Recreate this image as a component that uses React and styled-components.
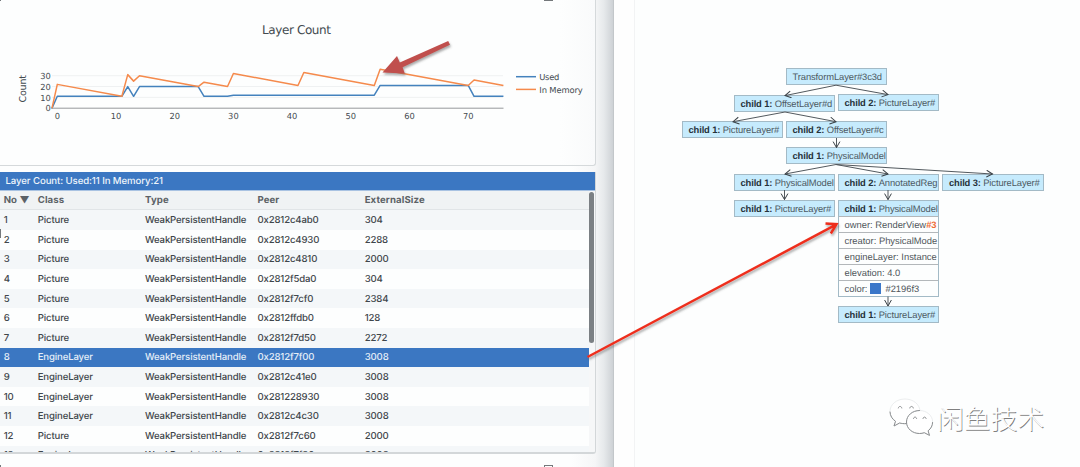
import React from "react";
import styled, { createGlobalStyle } from "styled-components";

const GlobalStyle = createGlobalStyle`
  * {
    box-sizing: border-box;
  }
  body {
    margin: 0;
    background: #fdfefe;
    overflow: hidden;
    text-rendering: geometricPrecision;
  }
`;

const Page = styled.div`
  position: relative;
  display: flex;
  width: 1080px;
  height: 467px;
  overflow: hidden;
  font-family: Inter, sans-serif;
`;
const Inspector = styled.div`
  width: 614px;
  height: 467px;
  flex: none;
  padding-right: 17px;
  border-right: 1px solid #c3c7ca;
  background: linear-gradient(to right, #fdfefe 572px, #f5f6f7 595px, #e6e9eb 604px, #cbcfd3 614px);
`;
const ChartPanel = styled.div`
  height: 166px;
  border: solid #d5d9db;
  border-width: 0 1px 1px 0;
  border-bottom-right-radius: 3px;
  background: linear-gradient(to right, #fdfefe 560px, #f9fafb);
`;
const TablePanel = styled.div`
  margin-top: 6px;
  height: 282px;
  overflow: hidden;
  border: solid #d3d7d9;
  border-width: 0 1px 2px 0;
  border-bottom-right-radius: 3px;
  display: flex;
  flex-direction: column;
`;
const TableTitle = styled.div`
  flex: none;
  height: 19px;
  padding: 1px 0 0 5.5px;
  line-height: 18px;
  font-size: 9.6px;
  font-weight: 500;
  letter-spacing: -0.08px;
  color: #eef5fb;
  background: #3b77c2;
  border-bottom: 1px solid #a9c3e2;
`;
const TableBody = styled.div`
  display: flex;
  flex: 1;
  min-height: 0;
`;
const Rows = styled.div`
  flex: 1;
  overflow: hidden;
`;
const Track = styled.div`
  width: 6px;
  padding-top: 1px;
  background: #f6f7f8;
`;
const Thumb = styled.div`
  width: 5px;
  height: 151px;
  border-radius: 3px;
  background: #7b8084;
`;
const Row = styled.div`
  display: grid;
  grid-template-columns: 34px 107.3px 112.4px 107.3px 1fr;
  height: 19.6px;
  padding: 1px 0 0 3.7px;
  align-items: center;
  font-size: 9.6px;
  font-weight: 500;
  letter-spacing: -0.14px;
  white-space: nowrap;
  color: ${(props) => (props.$selected ? "#e4eef8" : "#3f464b")};
  background: ${(props) =>
    props.$selected ? "#3b77c2" : props.$odd ? "#f4f7f9" : "#fdfefe"};
`;
const HeadRow = styled(Row)`
  height: 19.4px;
  font-weight: 700;
  letter-spacing: 0.12px;
  color: #5c6266;
  background: #f0f3f4;
  border-bottom: 1px solid #e1e5e7;
`;
const Canvas = styled.div`
  position: relative;
  flex: 1;
  background: #fdfefe;
  border-left: 20px solid #fefefe;
  box-shadow: inset 1px 0 0 #f2f3f4;
`;
const Node = styled.div`
  position: absolute;
  left: ${(props) => props.$x - 634}px;
  top: ${(props) => props.$y}px;
  width: 101.5px;
  border: 1px solid #a3bac6;
  font-family: "Liberation Sans", Arial, sans-serif;
  font-size: 9.4px;
  color: #4d5962;
`;
const NodeTitle = styled.div`
  height: 15px;
  line-height: 15px;
  padding-left: 6px;
  overflow: hidden;
  white-space: nowrap;
  letter-spacing: -0.1px;
  background: #c6ebfd;

  b {
    color: #26323a;
    letter-spacing: -0.14px;
  }
`;
const Property = styled.div`
  display: flex;
  align-items: center;
  height: 16.1px;
  padding-left: 6px;
  white-space: nowrap;
  overflow: hidden;
  border-top: 1px solid #b3b7ba;
  background: #fdfefe;
  color: #50565b;
`;
const Hash = styled.span`
  color: #ee6a35;
  font-weight: bold;
`;
const Swatch = styled.i`
  width: 11px;
  height: 11px;
  margin: 0 4px 0 3px;
  background: #3b77c9;
`;
const Overlay = styled.svg`
  position: absolute;
  left: 0;
  top: 0;
  pointer-events: none;
`;
const Watermark = styled.div`
  position: absolute;
  left: 888px;
  top: 397px;
  display: flex;
  align-items: center;
  gap: 3px;
  height: 42px;
`;
const WatermarkText = styled.span`
  font-family: "Noto Sans CJK SC", sans-serif;
  font-size: 26.8px;
  font-weight: 300;
  line-height: 40px;
  color: #fff;
  text-shadow: 0.8px 0.8px 0.5px #808080;
`;
const Handle = styled.i`
  position: absolute;
  left: ${(props) => props.$x}px;
  top: ${(props) => props.$y}px;
  width: 9px;
  height: 9px;
  border: 1px solid #74787b;
`;

const px = (v) => 57.3 + v * 5.87;
const py = (v) => 108.2 - v * 1.083;
const toPoints = (data) => data.map(([x, y]) => `${px(x)},${py(y)}`).join(" ");

const used = [
  [-0.9, 0], [0, 11], [11, 11], [12, 20], [13, 11], [14, 20], [24, 20],
  [25, 11], [29, 11], [30, 12], [54, 12], [55, 21], [70, 21], [71, 11], [76, 11],
];
const inMemory = [
  [-0.9, 0], [0, 22], [11, 11], [12, 31], [13, 25], [14, 30], [24, 20], [25, 24],
  [29, 20], [30, 32], [41, 21], [42, 33], [54, 21], [55, 36], [70, 21], [71, 26], [76, 21],
];

function LayerChart() {
  return (
    <svg width="595" height="165" fontFamily="DejaVu Sans, sans-serif" fill="#444b50">
      <text x="262" y="34" fontSize="12" textLength="69">Layer Count</text>
      <text transform="translate(26.3 102.5) rotate(-90)" fontSize="9.5" textLength="27.5">
        Count
      </text>
      {[10, 20, 30].map((v) => (
        <line key={v} x1="52" x2="503" y1={py(v)} y2={py(v)} stroke="#eff1f2" />
      ))}
      <line x1="51" x2="503.5" y1="108.2" y2="108.2" stroke="#96999b" />
      {[0, 10, 20, 30].map((v) => (
        <text key={v} x="50.7" y={py(v) + 3.2} fontSize="8.3" textAnchor="end">{v}</text>
      ))}
      {[0, 10, 20, 30, 40, 50, 60, 70].map((v) => (
        <text key={v} x={px(v)} y="119.3" fontSize="8.3" textAnchor="middle">{v}</text>
      ))}
      <g fill="none" strokeWidth="1.5" strokeLinejoin="round">
        <polyline points={toPoints(used)} stroke="#4482bd" />
        <polyline points={toPoints(inMemory)} stroke="#f58a4c" />
        <path d="M516 76.7h20" stroke="#4482bd" />
        <path d="M516 89.4h20" stroke="#f58a4c" />
      </g>
      <text x="539.3" y="80.2" fontSize="8.4" textLength="20">Used</text>
      <text x="539.3" y="92.8" fontSize="8.4" textLength="43.5">In Memory</text>
    </svg>
  );
}

const rows = [
  ["Picture", "0x2812c4ab0", "304"],
  ["Picture", "0x2812c4930", "2288"],
  ["Picture", "0x2812c4810", "2000"],
  ["Picture", "0x2812f5da0", "304"],
  ["Picture", "0x2812f7cf0", "2384"],
  ["Picture", "0x2812ffdb0", "128"],
  ["Picture", "0x2812f7d50", "2272"],
  ["EngineLayer", "0x2812f7f00", "3008"],
  ["EngineLayer", "0x2812c41e0", "3008"],
  ["EngineLayer", "0x281228930", "3008"],
  ["EngineLayer", "0x2812c4c30", "3008"],
  ["Picture", "0x2812f7c60", "2000"],
  ["EngineLayer", "0x2812f7f30", "3008"],
];

function LayerTable() {
  return (
    <TablePanel>
      <TableTitle>Layer Count: Used:11 In Memory:21</TableTitle>
      <TableBody>
        <Rows>
          <HeadRow>
            <span>No ▼</span>
            <span>Class</span>
            <span>Type</span>
            <span>Peer</span>
            <span>ExternalSize</span>
          </HeadRow>
          {rows.map(([name, peer, size], index) => (
            <Row key={peer} $odd={index % 2 === 0} $selected={index === 7}>
              <span>{index + 1}</span>
              <span>{name}</span>
              <span>WeakPersistentHandle</span>
              <span>{peer}</span>
              <span>{size}</span>
            </Row>
          ))}
        </Rows>
        <Track>
          <Thumb />
        </Track>
      </TableBody>
    </TablePanel>
  );
}

const nodes = [
  { x: 785.5, y: 68.4, name: "TransformLayer#3c3d" },
  { x: 733.5, y: 95.3, child: 1, name: "OffsetLayer#d" },
  { x: 837.5, y: 94, child: 2, name: "PictureLayer#" },
  { x: 681.5, y: 121.2, child: 1, name: "PictureLayer#" },
  { x: 785.5, y: 121.2, child: 2, name: "OffsetLayer#c" },
  { x: 785.5, y: 147.4, child: 1, name: "PhysicalModel" },
  { x: 733.5, y: 173.5, child: 1, name: "PhysicalModel" },
  { x: 837.5, y: 173.5, child: 2, name: "AnnotatedReg" },
  { x: 942, y: 173.5, child: 3, name: "PictureLayer#" },
  { x: 733.5, y: 199.6, child: 1, name: "PictureLayer#" },
  { x: 837.5, y: 305.6, child: 1, name: "PictureLayer#" },
];

const edges = [
  [836, 85.2, 785, 95.6],
  [836, 85.2, 888, 94.6],
  [785, 112, 733, 121.7],
  [785, 112, 836, 121.7],
  [836.5, 138, 836.5, 147.6],
  [836, 164.5, 785, 174],
  [836, 164.5, 888, 174],
  [836, 164.5, 992.5, 174],
  [784.5, 190, 784.5, 199.6],
  [888, 190, 888, 199.6],
  [888, 296.5, 888, 306],
];

function LayerTree() {
  return (
    <Canvas>
      {nodes.map(({ x, y, child, name }) => (
        <Node key={`${x}-${y}`} $x={x} $y={y}>
          <NodeTitle>
            {child && <b>child {child}: </b>}
            {name}
          </NodeTitle>
        </Node>
      ))}
      <Node $x={837.5} $y={199.6}>
        <NodeTitle><b>child 1: </b>PhysicalModel</NodeTitle>
        <Property>owner: RenderView<Hash>#3</Hash></Property>
        <Property>creator: PhysicalMode</Property>
        <Property>engineLayer: Instance</Property>
        <Property>elevation: 4.0</Property>
        <Property>color: <Swatch />#2196f3</Property>
      </Node>
    </Canvas>
  );
}

function Arrows() {
  return (
    <Overlay width="1080" height="467">
      <defs>
        <filter id="shadow" x="-20%" y="-20%" width="150%" height="150%">
          <feDropShadow dx="1" dy="2" stdDeviation="1.2" floodColor="#555" floodOpacity="0.5" />
        </filter>
        <marker id="head" markerUnits="userSpaceOnUse" markerWidth="9" markerHeight="9" refX="7" refY="4" orient="auto">
          <path d="M1 0.6L7 4L1 7.4" fill="none" stroke="#3a4146" />
        </marker>
      </defs>
      {edges.map(([x1, y1, x2, y2]) => (
        <line key={`${x1}-${y1}-${x2}`} x1={x1} y1={y1} x2={x2} y2={y2} stroke="#52595e" markerEnd="url(#head)" />
      ))}
      <path
        d="M448.2 41L450 44.8L402.6 67.2L404.8 73.4L382.5 72.6L397 56L399.8 62.6Z"
        fill="#c0504d"
        filter="url(#shadow)"
      />
      <path
        d="M587.5 357L836 224.7M825.5 223.5L836.5 224.2L830.8 233.5"
        fill="none"
        stroke="#ee2f1e"
        strokeWidth="2.5"
        filter="url(#shadow)"
      />
    </Overlay>
  );
}

function WeChatLogo() {
  return (
    <svg width="46" height="42" viewBox="0 0 46 42">
      <g fill="#fff" stroke="#e3e5e6" strokeWidth="0.7">
        <path d="M17 2C8.5 2 2 7.500 2 14.500c0 4 2 7.300 5.500 9.600L6 29l5.600-3c1.700.5 3.500.8 5.400.8 8.500 0 15-5.500 15-12.300S25.500 2 17 2Z" />
        <path d="M31.500 13.500C24.300 13.500 18.500 18.500 18.500 25s5.800 11.500 13 11.500c1.700 0 3.300-.3 4.800-.8l5.200 2.700-1.400-4.600c2.800-2.100 4.500-5.200 4.500-8.800 0-6.500-5.900-11.500-13.100-11.500Z" />
      </g>
      <g fill="none" stroke="#8b8e90" strokeWidth="1" strokeLinecap="round">
        <path d="M2 15c.2 4 2.200 7 5.500 9.300L6 29l5.600-3c2 .5 4 .8 6.500.6" />
        <path d="M31.500 13.500C24.300 13.500 18.500 18.500 18.500 25s5.800 11.500 13 11.500c1.700 0 3.300-.3 4.800-.8l5.200 2.700-1.400-4.600c2.800-2.100 4.500-5.200 4.500-8.300" />
        <path d="M10.300 11c.3-2.200 3.200-2.200 3.500 0M21.800 11c.3-2.200 3.200-2.200 3.500 0M25.500 21.500c.3-2 2.800-2 3.100 0M35 21.500c.3-2 2.800-2 3.100 0" />
      </g>
    </svg>
  );
}

function App() {
  return (
    <>
      <GlobalStyle />
      <Page>
        <Inspector>
          <ChartPanel>
            <LayerChart />
          </ChartPanel>
          <LayerTable />
        </Inspector>
        <LayerTree />
        <Arrows />
        <Watermark>
          <WeChatLogo />
          <WatermarkText>闲鱼技术</WatermarkText>
        </Watermark>
        <Handle $x={-8} $y={-8} />
        <Handle $x={544} $y={-8} />
        <Handle $x={-8} $y={229} />
        <Handle $x={-8} $y={465} />
        <Handle $x={544} $y={465} />
      </Page>
    </>
  );
}

export default App;
